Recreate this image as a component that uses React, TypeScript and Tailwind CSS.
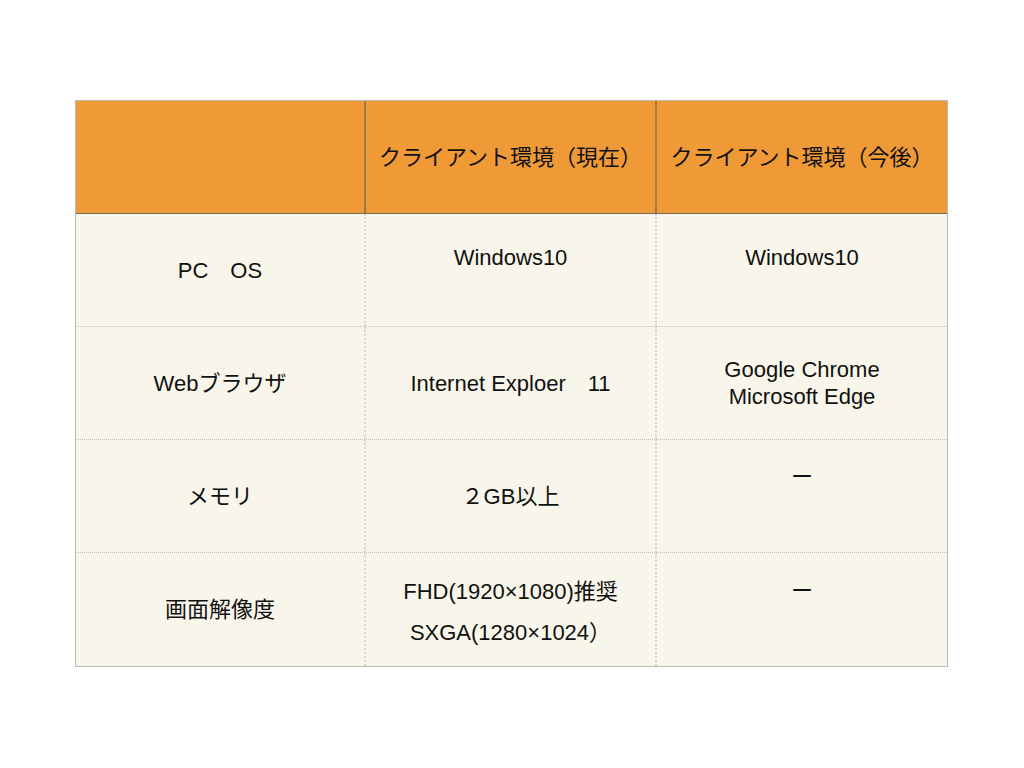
import React from "react"

// environment comparison table
type Cell = { lines: string[]; pad?: string; gap?: boolean }

const header = ["", "クライアント環境（現在）", "クライアント環境（今後）"]

const rows: Cell[][] = [
  [
    { lines: ["PC　OS"] },
    { lines: ["Windows10"], pad: "pb-[25px]" },
    { lines: ["Windows10"], pad: "pb-[25px]" },
  ],
  [
    { lines: ["Webブラウザ"] },
    { lines: ["Internet Exploer　11"] },
    { lines: ["Google Chrome", "Microsoft Edge"] },
  ],
  [
    { lines: ["メモリ"] },
    { lines: ["２GB以上"] },
    { lines: ["ー"], pad: "pb-[39px]" },
  ],
  [
    { lines: ["画面解像度"] },
    { lines: ["FHD(1920×1080)推奨", "SXGA(1280×1024）"], gap: true, pad: "pt-[4px]" },
    { lines: ["ー"], pad: "pb-[39px]" },
  ],
]

export default function App() {
  return (
    <div className="w-[1024px] h-[768px] bg-white pt-[100px] pl-[75px] font-['Liberation_Sans','Noto_Sans_CJK_JP',sans-serif] text-[22px] leading-[27px] text-[#111]">
      <div className="w-[873px] border border-[#b9b9b9]">
        {/* Header */}
        <div className="grid grid-cols-[290px_291px_290px] h-[113px] bg-[#ef9a37] border-b border-[#74695b]">
          {header.map((h, i) => (
            <div
              key={i}
              className={`flex items-center justify-center ${i < 2 ? "border-r-2 border-[#9c7b52]" : ""}`}
            >
              {h}
            </div>
          ))}
        </div>

        {/* Body */}
        {rows.map((row, r) => (
          <div
            key={r}
            className={`grid grid-cols-[290px_291px_290px] h-[113px] bg-[#f8f6ea] ${
              r < rows.length - 1 ? "border-b border-dotted border-[#bdbdbd]" : ""
            }`}
          >
            {row.map((cell, c) => (
              <div
                key={c}
                className={`flex items-center justify-center text-center ${
                  c < 2 ? "border-r-2 border-dotted border-[#d6d6d4]" : ""
                }`}
              >
                <div className={`flex flex-col items-center ${cell.gap ? "gap-[14px]" : ""} ${cell.pad ?? ""}`}>
                  {cell.lines.map((l, k) => (
                    <span key={k} className="whitespace-nowrap">
                      {l}
                    </span>
                  ))}
                </div>
              </div>
            ))}
          </div>
        ))}
      </div>
    </div>
  )
}
